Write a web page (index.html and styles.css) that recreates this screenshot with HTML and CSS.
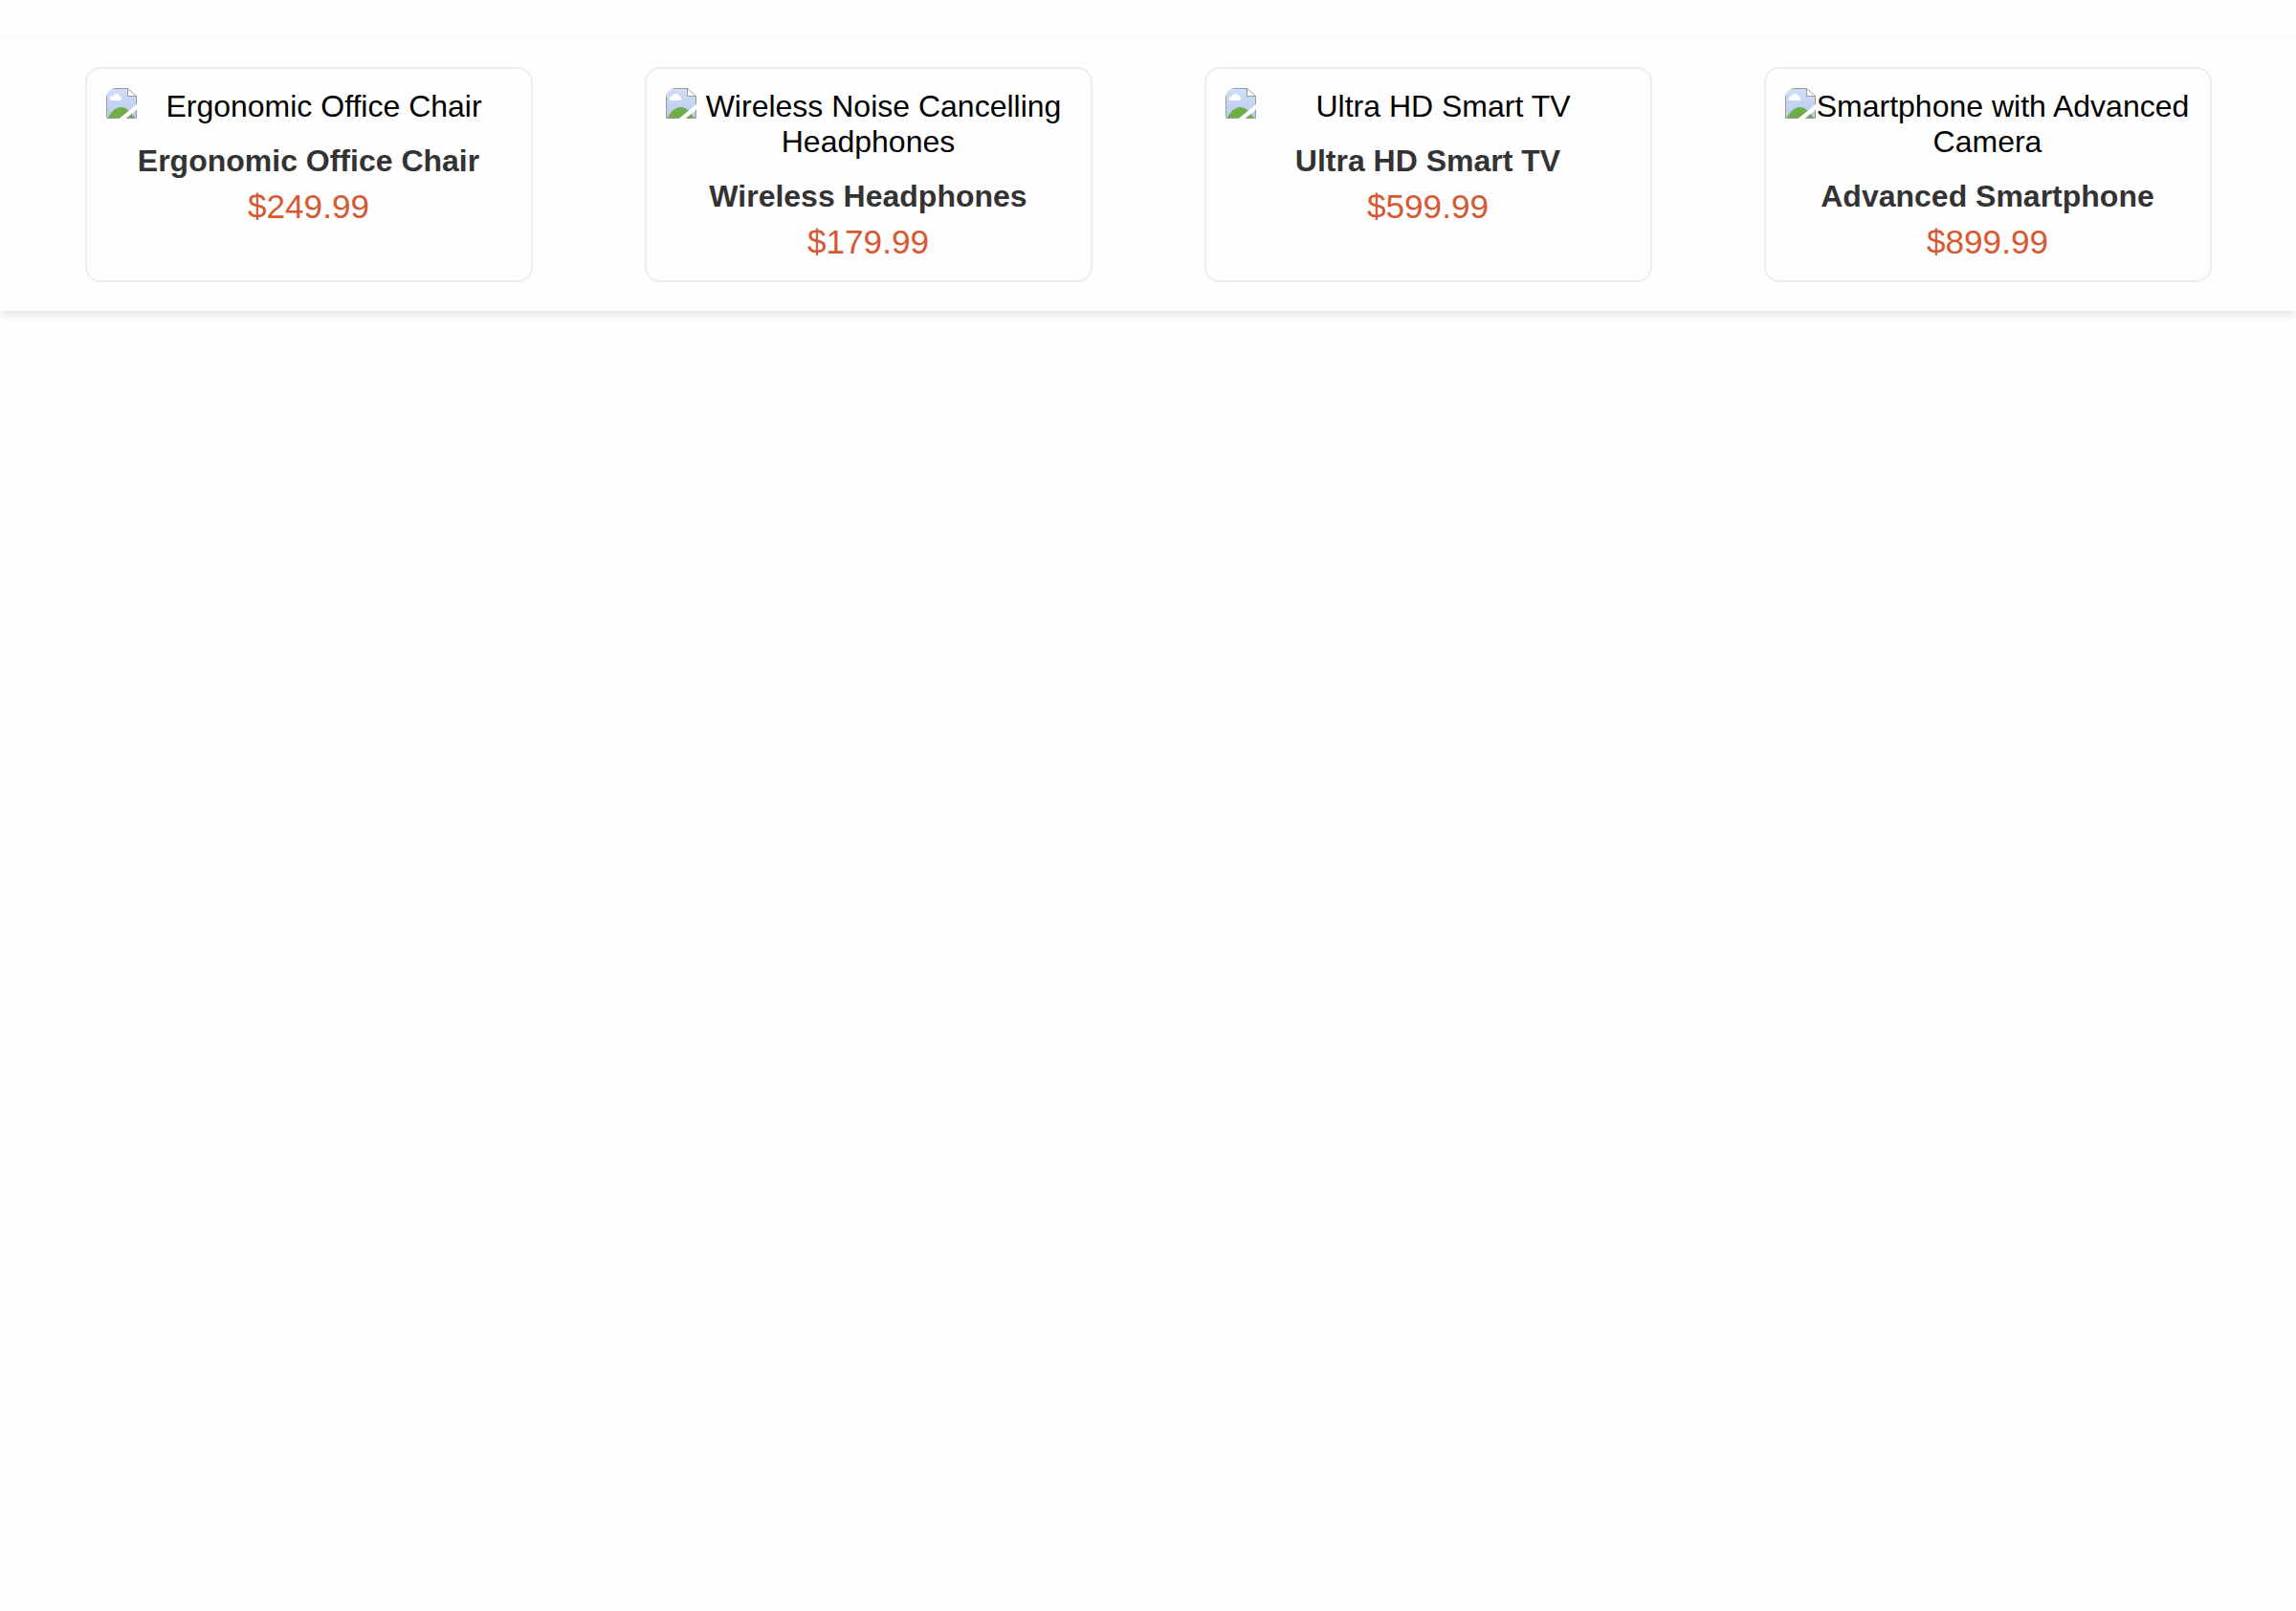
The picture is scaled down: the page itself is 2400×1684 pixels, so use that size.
FILE: index.html
```html
<!DOCTYPE html>
<html lang="en">
<head>
<meta charset="utf-8">
<title>Products</title>
<link rel="stylesheet" href="styles.css">
</head>
<body>
<svg class="defs" aria-hidden="true">
  <symbol id="photo" viewBox="0 0 32 32">
    <linearGradient id="sky" x1="0" y1="0" x2="0" y2="1"><stop offset="0" stop-color="#d0dff8"/><stop offset="1" stop-color="#b9c9ed"/></linearGradient>
    <path d="M.5.5H22.5L31.5 9V31.5H.5Z" fill="url(#sky)"/>
    <path d="M1.500 31.500C5 25 10 20 15 20C19 20 22 22 24.500 24.500L30 31.500Z" fill="#6fad47"/>
    <path d="M6.500 13C2.500 13 3 8.500 6.500 8.700C8 5 13.500 5 14.200 8.800C17 9 17 13 14 13Z" fill="#fff"/>
    <path d="M22.500.5V8.500H31.500Z" fill="#fff"/>
    <path d="M.5.5H22.500L31.500 8.500V31.500H.5ZM22.500.5V8.500H31.500" fill="none" stroke="#999"/>
    <path d="M32 17V22.500L20.500 32H13.500Z" fill="#fff"/>
  </symbol>
</svg>
<main class="carousel">
  <article class="product">
    <div class="picture"><svg class="icon"><use href="#photo"/></svg>Ergonomic Office Chair</div>
    <h2 class="name">Ergonomic Office Chair</h2>
    <p class="price">$249.99</p>
  </article>
  <article class="product">
    <div class="picture"><svg class="icon"><use href="#photo"/></svg>Wireless Noise Cancelling Headphones</div>
    <h2 class="name">Wireless Headphones</h2>
    <p class="price">$179.99</p>
  </article>
  <article class="product">
    <div class="picture"><svg class="icon"><use href="#photo"/></svg>Ultra HD Smart TV</div>
    <h2 class="name">Ultra HD Smart TV</h2>
    <p class="price">$599.99</p>
  </article>
  <article class="product">
    <div class="picture"><svg class="icon"><use href="#photo"/></svg>Smartphone with Advanced Camera</div>
    <h2 class="name">Advanced Smartphone</h2>
    <p class="price">$899.99</p>
  </article>
</main>
</body>
</html>
```
FILE: styles.css
```css
* { box-sizing: border-box; }
html { min-height: 100%; background: #fefefe; }
body {
  margin: 0;
  padding: 40px 0;
  color: #000;
  font: 32px/37px "Liberation Sans", Arial, sans-serif;
}
.defs { display: block; width: 0; height: 0; }
.carousel {
  display: flex;
  justify-content: space-around;
  padding: 30px;
  background: #fefefe;
  box-shadow: 0 4px 10px rgba(0, 0, 0, 0.1);
}
.product {
  width: 20%;
  padding: 20px;
  border: 2px solid #eee;
  border-radius: 16px;
  text-align: center;
}
.picture {
  margin-bottom: 20px;
  padding-top: 1px;
  border-radius: 10px;
  overflow: hidden;
}
.icon { float: left; width: 32px; height: 32px; margin-top: -1px; }
.name {
  margin: 0 0 9px;
  color: #333;
  font-size: 32px;
  font-weight: bold;
}
.price {
  margin: 0;
  color: #d55a34;
  font-size: 35.2px;
  line-height: 40px;
}
```
